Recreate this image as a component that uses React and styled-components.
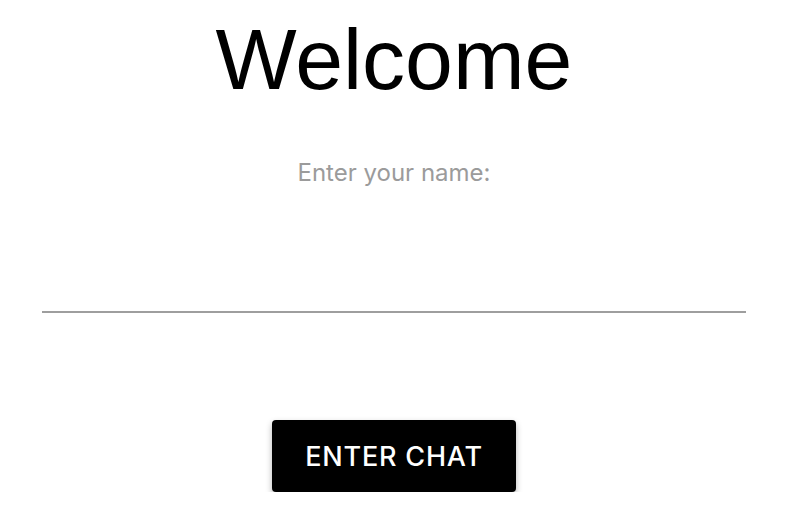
import React from "react";
import styled, { createGlobalStyle } from "styled-components";

const Global = createGlobalStyle`
  html, body { margin: 0; padding: 0; background: #fff; }
  body { font-family: "Liberation Sans", Arial, sans-serif; }
`;

const Page = styled.main`
  width: 790px;
  display: flex;
  flex-direction: column;
  align-items: center;
  padding-top: 16px;
`;

const Title = styled.h1`
  margin: 0 2px 0 0;
  font-family: "Liberation Sans", Arial, sans-serif;
  font-weight: 400;
  font-size: 86px;
  line-height: 1;
  color: #000;
`;

const Field = styled.label`
  margin: 59px 2px 0 0;
  width: 704px;
  display: flex;
  flex-direction: column;
  align-items: center;
`;

const LabelText = styled.span`
  font-family: Inter, "Liberation Sans", sans-serif;
  font-size: 24px;
  line-height: 1;
  color: #9b9b9b;
`;

const Input = styled.input`
  margin-top: 102px;
  width: 100%;
  height: 26px;
  box-sizing: border-box;
  border: none;
  border-bottom: 2px solid #9e9e9e;
  outline: none;
  background: transparent;
  font-size: 20px;
  text-align: center;
  padding: 0;
`;

const Button = styled.button`
  margin: 107px 2px 0 0;
  width: 244px;
  height: 72px;
  background: #000;
  color: #fff;
  border: none;
  border-radius: 4px;
  box-shadow: 0 3px 6px rgba(0, 0, 0, 0.3);
  font-family: Inter, "Liberation Sans", sans-serif;
  font-weight: 500;
  font-size: 27px;
  letter-spacing: 0.8px;
  cursor: pointer;
`;

export default function App() {
  return (
    <>
      <Global />
      <Page>
        <Title>Welcome</Title>
        <Field>
          <LabelText>Enter your name:</LabelText>
          <Input type="text" />
        </Field>
        <Button>ENTER CHAT</Button>
      </Page>
    </>
  );
}
